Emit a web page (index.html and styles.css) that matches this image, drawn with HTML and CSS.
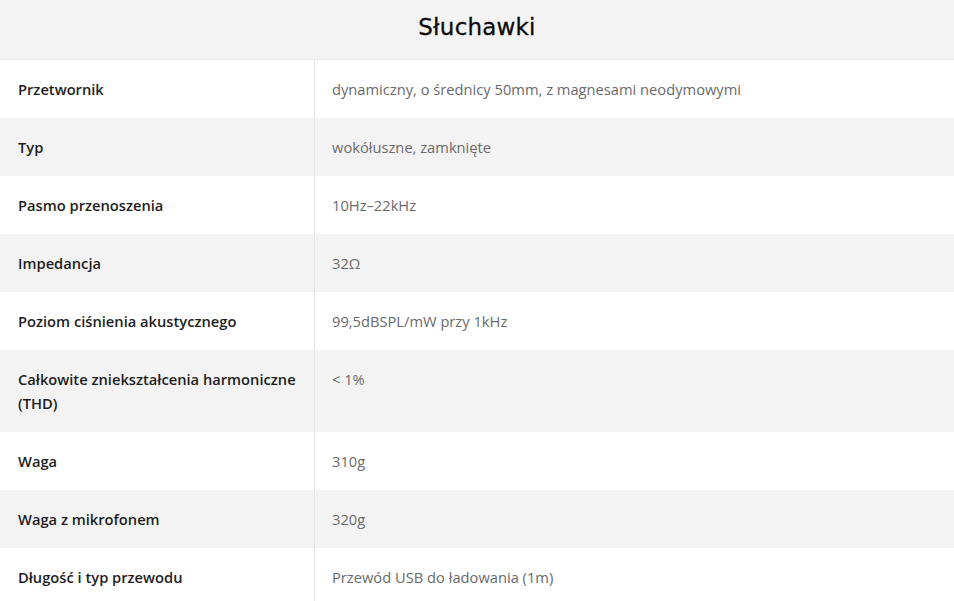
FILE: index.html
```html
<!DOCTYPE html>
<html lang="pl">
<head>
<meta charset="utf-8">
<link rel="stylesheet" href="styles.css">
</head>
<body>
<div class="specs">
  <h2 class="title">Słuchawki</h2>
  <div class="table">
    <div class="row"><div class="label">Przetwornik</div><div class="value">dynamiczny, o średnicy 50mm, z magnesami neodymowymi</div></div>
    <div class="row alt"><div class="label">Typ</div><div class="value">wokółuszne, zamknięte</div></div>
    <div class="row"><div class="label">Pasmo przenoszenia</div><div class="value">10Hz–22kHz</div></div>
    <div class="row alt"><div class="label">Impedancja</div><div class="value">32Ω</div></div>
    <div class="row"><div class="label">Poziom ciśnienia akustycznego</div><div class="value">99,5dBSPL/mW przy 1kHz</div></div>
    <div class="row alt"><div class="label">Całkowite zniekształcenia harmoniczne (THD)</div><div class="value">&lt; 1%</div></div>
    <div class="row"><div class="label">Waga</div><div class="value">310g</div></div>
    <div class="row alt"><div class="label">Waga z mikrofonem</div><div class="value">320g</div></div>
    <div class="row"><div class="label">Długość i typ przewodu</div><div class="value">Przewód USB do ładowania (1m)</div></div>
  </div>
</div>
</body>
</html>
```
FILE: styles.css
```css
html, body {
  margin: 0;
  padding: 0;
  background: #ffffff;
}
body {
  font-family: "Open Sans", "Lato", sans-serif;
  font-size: 14.7px;
  line-height: 24px;
}
.title {
  margin: 0;
  height: 53px;
  padding-bottom: 6px;
  display: flex;
  align-items: center;
  justify-content: center;
  background: #f3f3f3;
  border-bottom: 1px solid #ebebeb;
  font-family: "DejaVu Sans", sans-serif;
  font-weight: normal;
  font-size: 23px;
  color: #0a0a0a;
  letter-spacing: 0.2px;
  -webkit-text-stroke: 0.3px #0a0a0a;
}
.table {
  display: flex;
  flex-direction: column;
}
.row {
  display: grid;
  grid-template-columns: 315px 1fr;
  background: #ffffff;
}
.row.alt {
  background: #f3f3f3;
}
.label {
  padding: 17px 18px 17px 18px;
  border-right: 1px solid #e6e6e6;
  color: #1e1e1e;
  font-weight: 600;
}
.value {
  padding: 17px 18px 17px 17px;
  color: #6a6a6a;
}
```
